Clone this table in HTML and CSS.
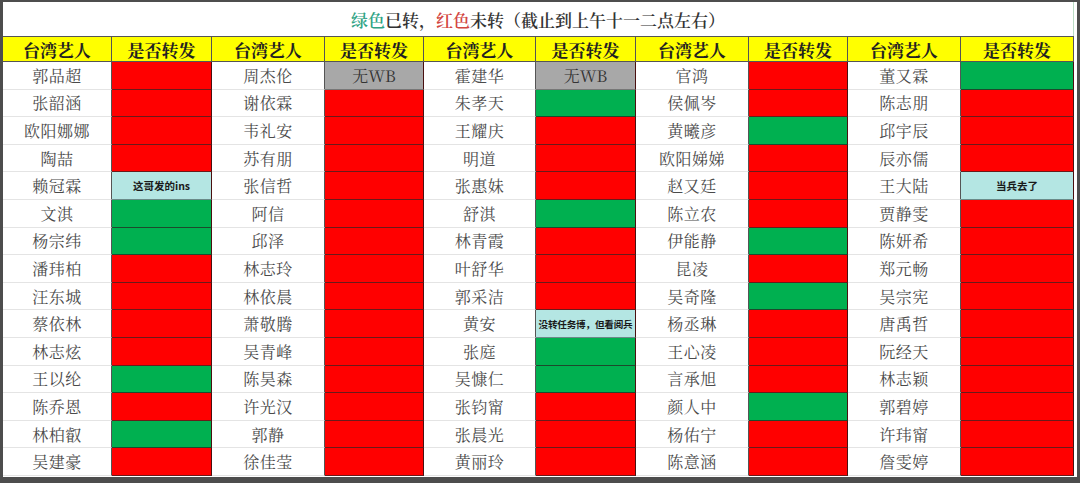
FILE: index.html
```html
<!DOCTYPE html>
<html lang="zh-CN">
<head>
<meta charset="utf-8">
<title>台湾艺人转发统计</title>
<link rel="stylesheet" href="styles.css">
</head>
<body>
<div class="frame">
  <div class="sheet">
    <div class="title"><span class="green">绿色</span>已转，<span class="red">红色</span>未转（截止到上午十一二点左右）</div>
    <div class="grid">
      <div class="hd">台湾艺人</div><div class="hd">是否转发</div>
      <div class="hd">台湾艺人</div><div class="hd">是否转发</div>
      <div class="hd">台湾艺人</div><div class="hd">是否转发</div>
      <div class="hd">台湾艺人</div><div class="hd">是否转发</div>
      <div class="hd">台湾艺人</div><div class="hd">是否转发</div>

      <div class="nm">郭品超</div><div class="st r"></div>
      <div class="nm">周杰伦</div><div class="st w">无WB</div>
      <div class="nm">霍建华</div><div class="st w">无WB</div>
      <div class="nm">官鸿</div><div class="st r"></div>
      <div class="nm">董又霖</div><div class="st g"></div>

      <div class="nm">张韶涵</div><div class="st r"></div>
      <div class="nm">谢依霖</div><div class="st r"></div>
      <div class="nm">朱孝天</div><div class="st g"></div>
      <div class="nm">侯佩岑</div><div class="st r"></div>
      <div class="nm">陈志朋</div><div class="st r"></div>

      <div class="nm">欧阳娜娜</div><div class="st r"></div>
      <div class="nm">韦礼安</div><div class="st r"></div>
      <div class="nm">王耀庆</div><div class="st r"></div>
      <div class="nm">黄曦彦</div><div class="st g"></div>
      <div class="nm">邱宇辰</div><div class="st r"></div>

      <div class="nm">陶喆</div><div class="st r"></div>
      <div class="nm">苏有朋</div><div class="st r"></div>
      <div class="nm">明道</div><div class="st r"></div>
      <div class="nm">欧阳娣娣</div><div class="st r"></div>
      <div class="nm">辰亦儒</div><div class="st r"></div>

      <div class="nm">赖冠霖</div><div class="st n">这哥发的ins</div>
      <div class="nm">张信哲</div><div class="st r"></div>
      <div class="nm">张惠妹</div><div class="st r"></div>
      <div class="nm">赵又廷</div><div class="st r"></div>
      <div class="nm">王大陆</div><div class="st n">当兵去了</div>

      <div class="nm">文淇</div><div class="st g"></div>
      <div class="nm">阿信</div><div class="st r"></div>
      <div class="nm">舒淇</div><div class="st g"></div>
      <div class="nm">陈立农</div><div class="st r"></div>
      <div class="nm">贾静雯</div><div class="st r"></div>

      <div class="nm">杨宗纬</div><div class="st g"></div>
      <div class="nm">邱泽</div><div class="st r"></div>
      <div class="nm">林青霞</div><div class="st r"></div>
      <div class="nm">伊能静</div><div class="st g"></div>
      <div class="nm">陈妍希</div><div class="st r"></div>

      <div class="nm">潘玮柏</div><div class="st r"></div>
      <div class="nm">林志玲</div><div class="st r"></div>
      <div class="nm">叶舒华</div><div class="st r"></div>
      <div class="nm">昆凌</div><div class="st r"></div>
      <div class="nm">郑元畅</div><div class="st r"></div>

      <div class="nm">汪东城</div><div class="st r"></div>
      <div class="nm">林依晨</div><div class="st r"></div>
      <div class="nm">郭采洁</div><div class="st r"></div>
      <div class="nm">吴奇隆</div><div class="st g"></div>
      <div class="nm">吴宗宪</div><div class="st r"></div>

      <div class="nm">蔡依林</div><div class="st r"></div>
      <div class="nm">萧敬腾</div><div class="st r"></div>
      <div class="nm">黄安</div><div class="st n tight">没转任务博，但看阅兵</div>
      <div class="nm">杨丞琳</div><div class="st r"></div>
      <div class="nm">唐禹哲</div><div class="st r"></div>

      <div class="nm">林志炫</div><div class="st r"></div>
      <div class="nm">吴青峰</div><div class="st r"></div>
      <div class="nm">张庭</div><div class="st g"></div>
      <div class="nm">王心凌</div><div class="st r"></div>
      <div class="nm">阮经天</div><div class="st r"></div>

      <div class="nm">王以纶</div><div class="st g"></div>
      <div class="nm">陈昊森</div><div class="st r"></div>
      <div class="nm">吴慷仁</div><div class="st g"></div>
      <div class="nm">言承旭</div><div class="st r"></div>
      <div class="nm">林志颖</div><div class="st r"></div>

      <div class="nm">陈乔恩</div><div class="st r"></div>
      <div class="nm">许光汉</div><div class="st r"></div>
      <div class="nm">张钧甯</div><div class="st r"></div>
      <div class="nm">颜人中</div><div class="st g"></div>
      <div class="nm">郭碧婷</div><div class="st r"></div>

      <div class="nm">林柏叡</div><div class="st g"></div>
      <div class="nm">郭静</div><div class="st r"></div>
      <div class="nm">张晨光</div><div class="st r"></div>
      <div class="nm">杨佑宁</div><div class="st r"></div>
      <div class="nm">许玮甯</div><div class="st r"></div>

      <div class="nm">吴建豪</div><div class="st r"></div>
      <div class="nm">徐佳莹</div><div class="st r"></div>
      <div class="nm">黄丽玲</div><div class="st r"></div>
      <div class="nm">陈意涵</div><div class="st r"></div>
      <div class="nm">詹雯婷</div><div class="st r"></div>
    </div>
  </div>
</div>
</body>
</html>
```

FILE: styles.css
```css
* { box-sizing: border-box; }

html, body {
  margin: 0;
  padding: 0;
  background: #4d4d4d;
}

.frame {
  width: 1080px;
  height: 483px;
  padding: 2px 3px 6px 3px;
  background: #4d4d4d;
}

.sheet {
  width: 1074px;
  height: 475px;
  background: #ffffff;
  font-family: "Noto Serif CJK SC", "Noto Sans CJK SC", serif;
  display: flex;
  flex-direction: column;
}

.title {
  height: 34px;
  width: 1071px;
  display: flex;
  align-items: center;
  justify-content: center;
  font-size: 17px;
  font-weight: 600;
  color: #333;
  border-right: 1px solid #b9dcc4;
  padding-left: 0;
}

.title .green { color: #2fa384; }
.title .red { color: #d2453f; }

.grid {
  display: grid;
  grid-template-columns: 109px 100px 113px 99px 112px 100px 113px 99px 113px 113px;
  grid-template-rows: 26px repeat(15, 27.6px);
  width: 1071px;
}

.hd {
  background: #ffff00;
  border-top: 1px solid #555;
  border-right: 1px solid #555;
  border-bottom: 1px solid #555;
  display: flex;
  align-items: center;
  justify-content: center;
  font-size: 17px;
  font-weight: 700;
  color: #222;
}

.nm {
  border-right: 1px solid #555;
  border-bottom: 1px solid #e4e4e4;
  display: flex;
  align-items: center;
  justify-content: center;
  font-size: 16px;
  color: #4a4a4a;
  letter-spacing: 0.5px;
}

.st {
  border-right: 1px solid #4a1010;
  border-bottom: 1px solid #6a1a1a;
  display: flex;
  align-items: center;
  justify-content: center;
}

.st.r { background: #ff0000; }
.st.g { background: #00b050; border-bottom-color: #1c4a2c; }
.st.w {
  background: #a8a8a8;
  border-bottom-color: #777;
  font-size: 16px;
  color: #333;
}
.st.n {
  background: #b4e6e3;
  border-bottom-color: #6a8a88;
  font-family: "Noto Sans CJK SC", sans-serif;
  font-size: 10.5px;
  font-weight: 700;
  color: #1a1a1a;
}
.st.n.tight {
  font-size: 9.6px;
  letter-spacing: -0.2px;
  white-space: nowrap;
}
```
